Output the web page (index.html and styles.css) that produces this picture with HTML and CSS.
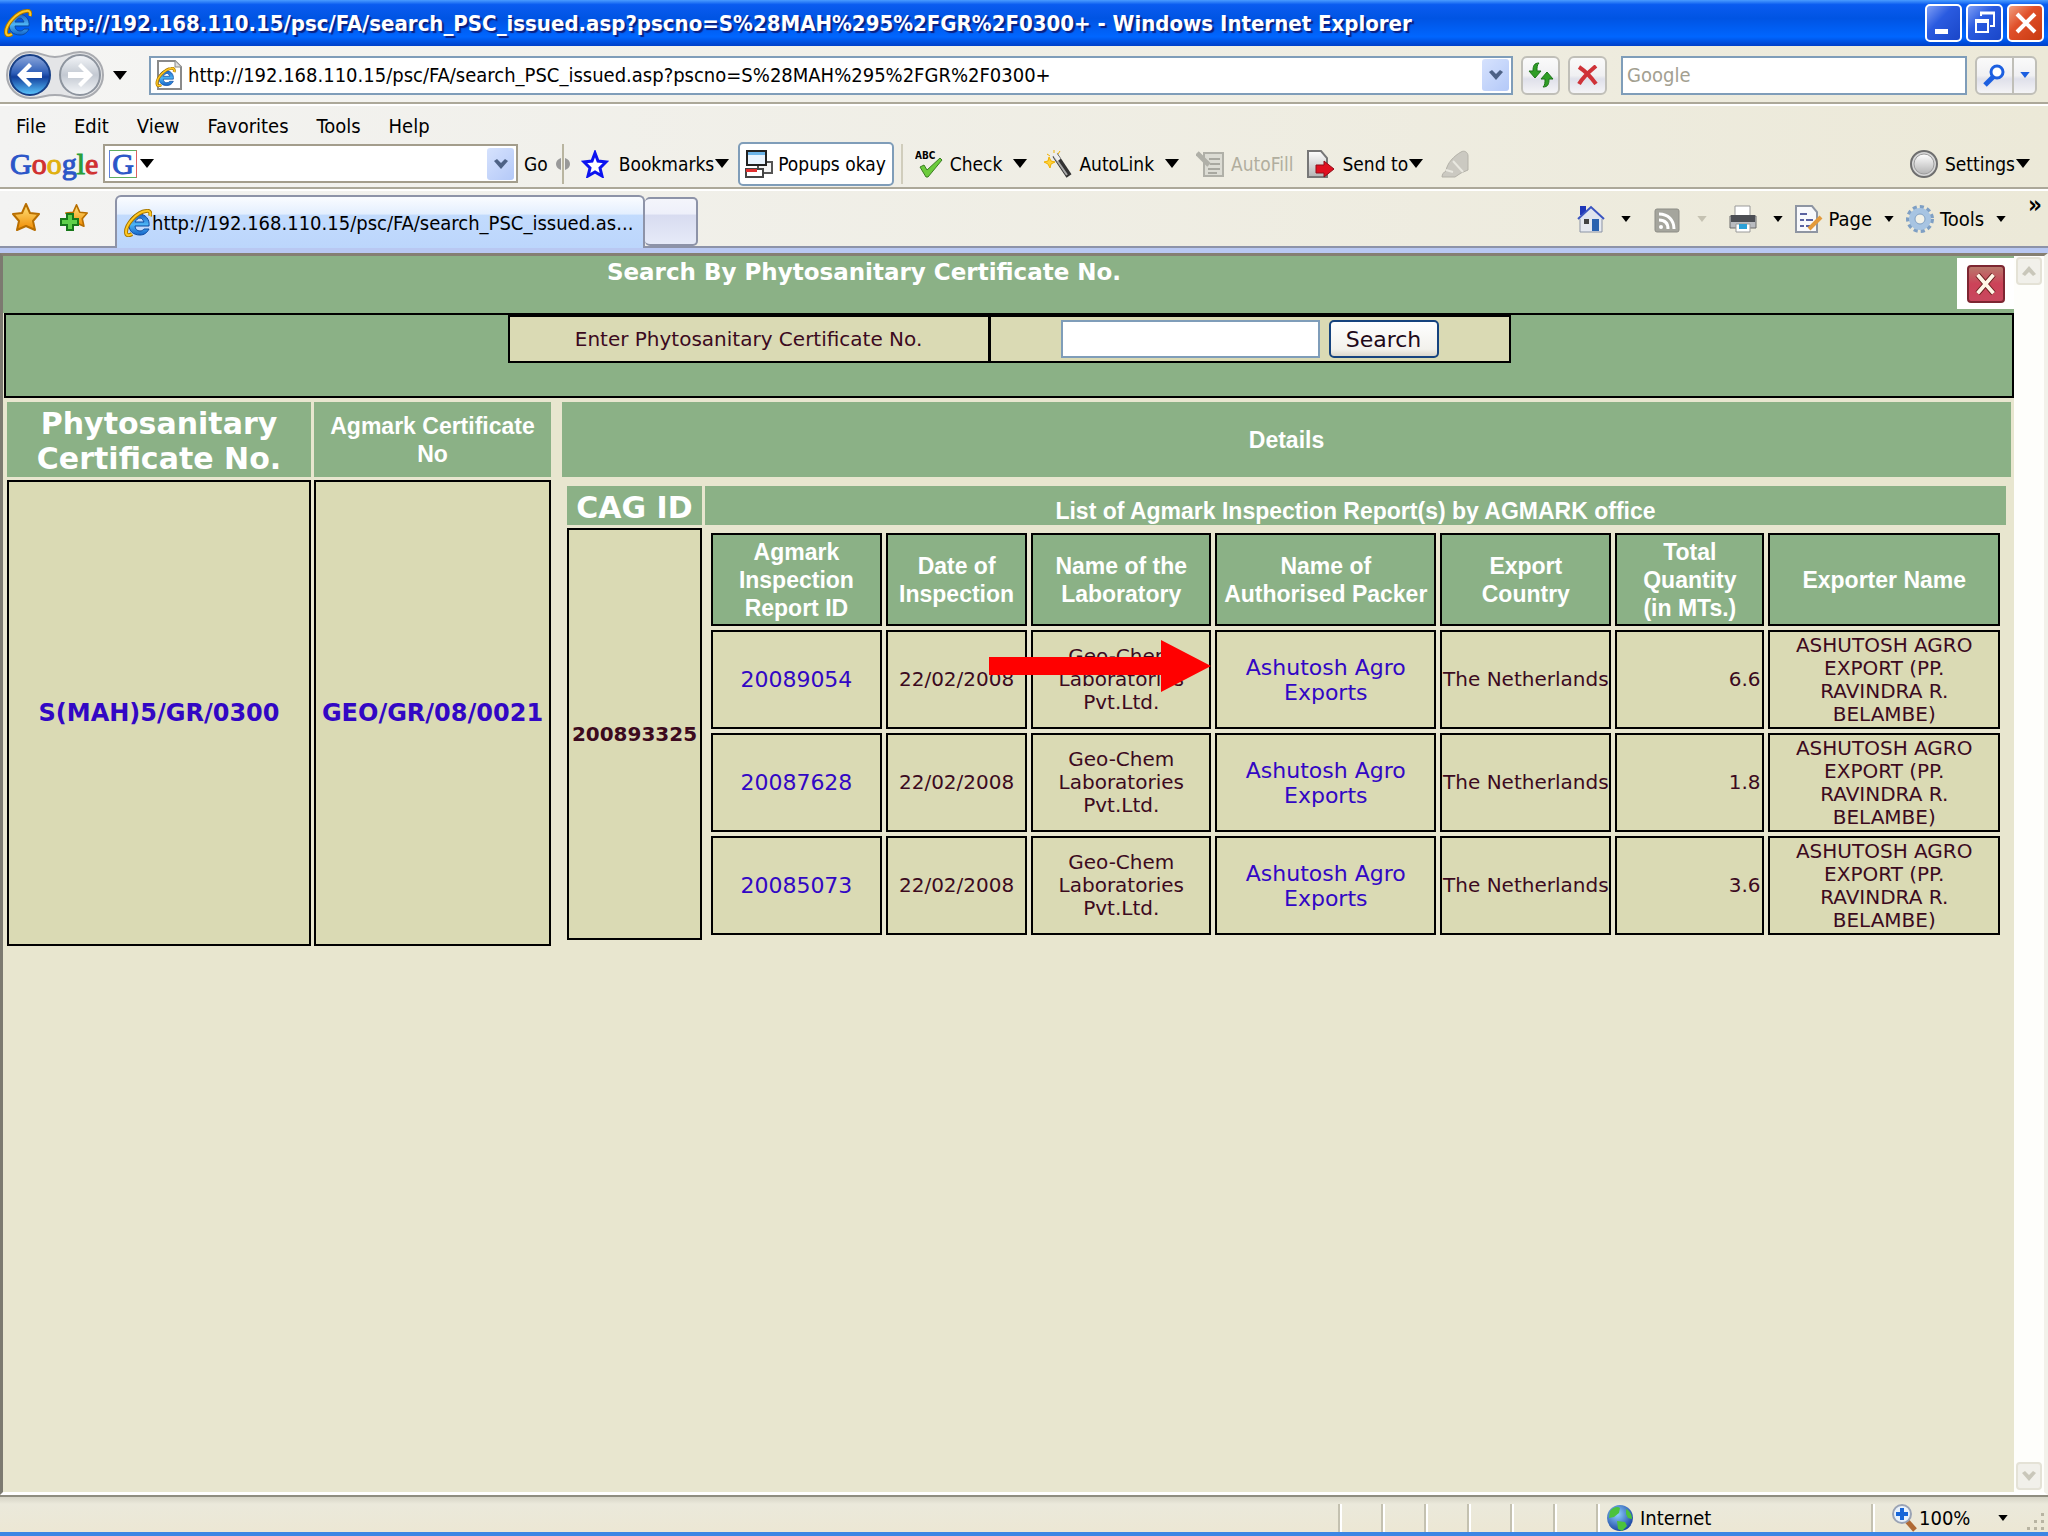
FILE: index.html
```html
<!DOCTYPE html>
<html lang="en">
<head>
    <meta charset="UTF-8">
    <meta name="viewport" content="width=device-width, initial-scale=1.0">
    <title>Search By Phytosanitary Certificate No.</title>
    <link rel="stylesheet" href="styles.css">
</head>
<body>
    <!-- shared icons -->
    <svg class="defs" width="0" height="0" aria-hidden="true">
        <defs>
            <linearGradient id="ie-blue" x1="0" y1="0" x2="0" y2="1">
                <stop offset="0" stop-color="#1c5fc4"/>
                <stop offset="0.5" stop-color="#4db4f4"/>
                <stop offset="1" stop-color="#1565c8"/>
            </linearGradient>
            <linearGradient id="gold" x1="0" y1="0" x2="0" y2="1">
                <stop offset="0" stop-color="#ffe680"/>
                <stop offset="1" stop-color="#f08a00"/>
            </linearGradient>
            <linearGradient id="back-fill" x1="0" y1="0" x2="0" y2="1">
                <stop offset="0" stop-color="#8fa9dc"/>
                <stop offset="0.45" stop-color="#2f5fb8"/>
                <stop offset="0.55" stop-color="#123f9c"/>
                <stop offset="1" stop-color="#5cc8ff"/>
            </linearGradient>
            <linearGradient id="fwd-fill" x1="0" y1="0" x2="0" y2="1">
                <stop offset="0" stop-color="#f4f6f9"/>
                <stop offset="0.5" stop-color="#c3c9d2"/>
                <stop offset="1" stop-color="#f6f8fa"/>
            </linearGradient>
            <linearGradient id="grey-fill" x1="0" y1="0" x2="0" y2="1">
                <stop offset="0" stop-color="#ffffff"/>
                <stop offset="1" stop-color="#b4b4b4"/>
            </linearGradient>
            <radialGradient id="globe-fill" cx="0.4" cy="0.35" r="0.7">
                <stop offset="0" stop-color="#8fd0ff"/>
                <stop offset="1" stop-color="#153f9e"/>
            </radialGradient>
        </defs>
        <symbol id="ie" viewBox="0 0 28 28">
            <path d="M25 17H11c0 3 2 5 5 5 2 0 3-1 4-2h5c-2 4-5 6-9 6-7 0-11-4-11-10S9 5 15 5s11 5 10 12zM11 13h9c-1-2-2-4-4-4s-4 2-5 4z" fill="url(#ie-blue)" stroke="#0d4aa0" stroke-width="1"/>
            <path d="M26 7c1-3 0-6-4-5C13 3 2 15 2 23c0 4 3 4 6 2" fill="none" stroke="#a97800" stroke-width="4"/>
            <path d="M26 7c1-3 0-6-4-5C13 3 2 15 2 23c0 4 3 4 6 2" fill="none" stroke="#ffc823" stroke-width="2"/>
        </symbol>
        <symbol id="down" viewBox="0 0 14 9">
            <path d="M0 0h14L7 9z" fill="currentColor"/>
        </symbol>
        <symbol id="chevron" viewBox="0 0 16 12">
            <path d="M1 3l3-2 4 4 4-4 3 2-7 8z" fill="currentColor"/>
        </symbol>
        <symbol id="star" viewBox="0 0 28 28">
            <path d="M14 1l4 9 9 1-6 7 2 9-9-4-9 4 2-9-6-7 9-1z" fill="url(#gold)" stroke="#b86e00" stroke-width="2" stroke-linejoin="round"/>
        </symbol>
    </svg>

    <header class="titlebar">
        <svg class="icon"><use href="#ie"/></svg>
        <span class="window-title">http://192.168.110.15/psc/FA/search_PSC_issued.asp?pscno=S%28MAH%295%2FGR%2F0300+ - Windows Internet Explorer</span>
        <div class="window-buttons">
            <button type="button" class="win-btn" aria-label="Minimize">
                <svg width="30" height="30" viewBox="0 0 30 30"><path d="M6 21h13v5H6z" fill="#fff"/></svg>
            </button>
            <button type="button" class="win-btn" aria-label="Restore">
                <svg width="30" height="30" viewBox="0 0 30 30" fill="none" stroke="#fff"><path d="M11 8V5h13v13h-4" stroke-width="2"/><path d="M10 5h15" stroke-width="3"/><path d="M6 12h12v12H6z" stroke-width="2"/><path d="M5 13h14" stroke-width="4"/></svg>
            </button>
            <button type="button" class="win-btn win-close" aria-label="Close">
                <svg width="30" height="30" viewBox="0 0 30 30"><path d="M6 6l18 18M24 6L6 24" stroke="#fff" stroke-width="4"/></svg>
            </button>
        </div>
    </header>

    <div class="navbar">
        <button type="button" class="travel" aria-label="Back and forward">
            <svg width="98" height="50" viewBox="0 0 98 50">
                <path d="M24 2c12 0 14 5 25 5S62 2 74 2a23 23 0 010 46c-12 0-14-3-25-3s-13 3-25 3a23 23 0 010-46z" fill="#e4e5e7" stroke="#a9abb0" stroke-width="2"/>
                <circle cx="24" cy="25" r="20" fill="url(#back-fill)" stroke="#173f86" stroke-width="2"/>
                <path d="M11 25l12-12 3 3-6 6h16v6H20l6 6-3 3z" fill="#fff"/>
                <circle cx="74" cy="25" r="20" fill="url(#fwd-fill)" stroke="#8d949e" stroke-width="2"/>
                <path d="M87 25L75 13l-3 3 6 6H62v6h16l-6 6 3 3z" fill="#fff"/>
            </svg>
        </button>
        <svg class="arrow"><use href="#down"/></svg>
        <div class="address">
            <svg width="28" height="30" viewBox="0 0 28 30">
                <path d="M3 1h17l6 6v22H3z" fill="#fff" stroke="#8a8a8a" stroke-width="2"/>
                <path d="M20 1v6h6" fill="#ddd" stroke="#8a8a8a"/>
                <use href="#ie" x="0" y="7" width="21" height="20"/>
            </svg>
            <input type="text" aria-label="Address" value="http://192.168.110.15/psc/FA/search_PSC_issued.asp?pscno=S%28MAH%295%2FGR%2F0300+">
            <button type="button" class="combo-btn" aria-label="Show addresses"><svg width="16" height="12"><use href="#chevron"/></svg></button>
        </div>
        <button type="button" class="nav-btn" aria-label="Refresh">
            <svg width="28" height="26" viewBox="0 0 28 26" fill="#2f9e26" stroke="#1c7518"><path d="M12 1C7 1 6 4 6 9H2l6 7 6-7h-4c0-4 0-6 2-8z"/><path d="M16 25c5 0 6-3 6-8h4l-6-7-6 7h4c0 4 0 6-2 8z"/></svg>
        </button>
        <button type="button" class="nav-btn" aria-label="Stop">
            <svg width="22" height="20" viewBox="0 0 22 20"><path d="M2 2c6 4 12 10 17 17M19 1C13 6 6 12 2 19" fill="none" stroke="#cf3238" stroke-width="4"/></svg>
        </button>
        <input type="text" class="search-box" aria-label="Search the web" placeholder="Google">
        <div class="split-btn">
            <button type="button" aria-label="Search"><svg width="24" height="24" viewBox="0 0 24 24"><circle cx="14" cy="9" r="6" fill="#fff" stroke="#1c5fe0" stroke-width="3"/><path d="M10 14l-8 8" stroke="#1c5fe0" stroke-width="5"/></svg></button>
            <button type="button" class="split-arrow" aria-label="Search options"><svg width="10" height="6"><use href="#down"/></svg></button>
        </div>
    </div>

    <nav class="menubar">
        <a href="#">File</a>
        <a href="#">Edit</a>
        <a href="#">View</a>
        <a href="#">Favorites</a>
        <a href="#">Tools</a>
        <a href="#">Help</a>
    </nav>

    <div class="google-bar">
        <span class="google-logo"><i class="b">G</i><i class="r">o</i><i class="y">o</i><i class="b">g</i><i class="g">l</i><i class="r">e</i></span>
        <div class="google-combo">
            <span class="g-box">G</span>
            <svg class="arrow"><use href="#down"/></svg>
            <input type="text" aria-label="Google search">
            <button type="button" class="combo-btn" aria-label="Search history"><svg width="16" height="12"><use href="#chevron"/></svg></button>
        </div>
        <button type="button" class="tool go">Go</button>
        <svg class="grip" width="14" height="40" viewBox="0 0 14 40"><path d="M7 0v40" stroke="#b9b5a0" stroke-width="2"/><path d="M5 14v12c-3-1-5-3-5-6s2-5 5-6zM9 14v12c3-1 5-3 5-6s-2-5-5-6z" fill="#999"/></svg>
        <button type="button" class="tool bookmarks">
            <svg class="icon" viewBox="0 0 28 28"><path d="M14 3l3 8 8 1-6 6 2 8-7-4-7 4 2-8-6-6 8-1z" fill="#fff" stroke="#0b12f0" stroke-width="3"/></svg>
            <span>Bookmarks</span><svg class="arrow"><use href="#down"/></svg>
        </button>
        <button type="button" class="tool popups">
            <svg class="icon" viewBox="0 0 28 28"><path d="M13 12h14v11H13z" fill="#f4f4f4" stroke="#555" stroke-width="2"/><path d="M1 19h17v8H1z" fill="#fff" stroke="#444" stroke-width="2"/><path d="M1 19h11v3H1z" fill="#e03030"/><path d="M2 1h19v14H2z" fill="#e9f4ff" stroke="#222" stroke-width="2"/><path d="M3 2h17v3H3z" fill="#6cb4e8"/></svg>
            <span>Popups okay</span>
        </button>
        <span class="divider"></span>
        <button type="button" class="tool check">
            <svg class="icon" viewBox="0 0 28 28"><text x="0" y="9" class="abc">ABC</text><path d="M5 17l4-2 3 5L25 8l2 2-14 17h-2z" fill="#6ccc3c" stroke="#3b7d22"/></svg>
            <span>Check</span><svg class="arrow far"><use href="#down"/></svg>
        </button>
        <button type="button" class="tool autolink">
            <svg class="icon" viewBox="0 0 28 28"><path d="M11 5l14 21" stroke="#333" stroke-width="6"/><path d="M10 6l13 19" stroke="#aaa" stroke-width="2"/><path d="M10 3l5 7" stroke="#eee" stroke-width="4"/><path d="M5 7l2 4 4 1-4 2-1 4-2-4-4-2 4-1zM10 0v3M16 1l-2 3M3 4l3 2" fill="#ffd23a" stroke="#f0b000"/></svg>
            <span>AutoLink</span><svg class="arrow far"><use href="#down"/></svg>
        </button>
        <button type="button" class="tool autofill" disabled>
            <svg class="icon" viewBox="0 0 28 28"><path d="M8 3h19v23H8z" fill="#dcdcd4" stroke="#b0b0a8" stroke-width="2"/><path d="M13 9h11M14 14h10M12 19h12M12 23h9" stroke="#a8a8a0" stroke-width="2"/><path d="M1 3l12 12" stroke="#b0b0a8" stroke-width="5"/></svg>
            <span>AutoFill</span>
        </button>
        <button type="button" class="tool send">
            <svg class="icon" viewBox="0 0 28 28"><path d="M1 1h13l6 7v19H1z" fill="url(#grey-fill)" stroke="#777" stroke-width="2"/><path d="M9 15h8v-4l10 8-10 8v-4H9z" fill="#e01020" stroke="#900c18"/></svg>
            <span>Send to</span><svg class="arrow"><use href="#down"/></svg>
        </button>
        <svg class="icon" viewBox="0 0 28 28"><path d="M20 2c3-2 7 0 7 4v14l-7 3-6 4H1c0-3 2-5 4-6 1-8 8-15 15-19z" fill="#cbc9c1" stroke="#b3b1a8"/><path d="M12 11l10 11M5 20l7 2" stroke="#e9e8e0" stroke-width="2"/></svg>
        <button type="button" class="tool settings">
            <svg class="icon" viewBox="0 0 28 28"><circle cx="14" cy="14" r="13" fill="#d6d6d6" stroke="#6e6e6e" stroke-width="2"/><circle cx="14" cy="14" r="10" fill="url(#grey-fill)" stroke="#9d9d9d" stroke-width="1"/></svg>
            <span>Settings</span><svg class="arrow"><use href="#down"/></svg>
        </button>
    </div>

    <div class="tabbar">
        <div class="favs">
            <svg class="icon"><use href="#star"/></svg>
            <svg class="icon" viewBox="0 0 28 28"><use href="#star" x="5" y="0" width="23" height="25"/><path d="M7 11h6v5h5v6h-5v5H7v-5H1v-6h6z" fill="#5fd04a" stroke="#17781a" stroke-width="2"/></svg>
        </div>
        <a class="tab" href="#"><svg class="icon"><use href="#ie"/></svg>http://192.168.110.15/psc/FA/search_PSC_issued.as...</a>
        <button type="button" class="new-tab" aria-label="New Tab"></button>
        <div class="commands">
            <button type="button" class="cmd" aria-label="Home">
                <svg class="icon" viewBox="0 0 28 28"><path d="M3 1h6v9H3z" fill="#2038b8"/><path d="M3 13h22v14H3z" fill="#e6e9f0" stroke="#8b93a5"/><path d="M1 14L14 2l13 12" fill="#dfe4ee" stroke="#3a54c0" stroke-width="2"/><path d="M15 14h7v12h-7z" fill="#2a62b0"/><path d="M7 14h5v5H7z" fill="#444"/></svg>
                <svg class="arrow small"><use href="#down"/></svg>
            </button>
            <button type="button" class="cmd off" aria-label="Feeds">
                <svg class="icon" viewBox="0 0 28 28"><rect x="2" y="4" width="24" height="23" rx="2" fill="#a5a59d" stroke="#8d8d86"/><path d="M6 9c9 0 15 6 15 15M6 15c6 0 9 3 9 9" fill="none" stroke="#fff" stroke-width="3"/><circle cx="8" cy="22" r="2" fill="#fff"/></svg>
                <svg class="arrow small"><use href="#down"/></svg>
            </button>
            <button type="button" class="cmd" aria-label="Print">
                <svg class="icon" viewBox="0 0 28 28"><path d="M6 1h15v11H6z" fill="#fff" stroke="#999"/><path d="M1 11h26v12H1z" fill="#b9bbc0" stroke="#6b6b6b"/><path d="M2 10h24v7H2z" fill="#4c4e54"/><path d="M7 19h14v8H7z" fill="#fff" stroke="#999"/><path d="M10 19h8v5h-8z" fill="#2aa0d8"/></svg>
                <svg class="arrow small"><use href="#down"/></svg>
            </button>
            <button type="button" class="cmd tight">
                <svg class="icon" viewBox="0 0 28 28"><path d="M1 1h16l5 6v20H1z" fill="#f8f9fc" stroke="#8e95a2" stroke-width="2"/><path d="M5 9h7M5 15h4M11 15h7M5 21h4M11 21h5" stroke="#5a62a0" stroke-width="2"/><path d="M26 12L14 24" stroke="#e39a3c" stroke-width="4"/></svg>
                <span>Page</span><svg class="arrow small"><use href="#down"/></svg>
            </button>
            <button type="button" class="cmd tight">
                <svg class="icon" viewBox="0 0 28 28"><circle cx="14" cy="14" r="12" fill="none" stroke="#7e9fc4" stroke-width="4" stroke-dasharray="4 3"/><circle cx="14" cy="14" r="8" fill="none" stroke="#a7c4e2" stroke-width="6"/><circle cx="14" cy="14" r="5" fill="#f3f2e8" stroke="#7e9fc4"/></svg>
                <span>Tools</span><svg class="arrow small"><use href="#down"/></svg>
            </button>
            <button type="button" class="more" aria-label="More">»</button>
        </div>
    </div>

    <div class="viewport">
        <main class="page">
            <div class="page-head">
                <h1>Search By Phytosanitary Certificate No.</h1>
                <div class="page-close">
                    <button type="button" aria-label="Close page"><svg width="30" height="30" viewBox="0 0 30 30"><path d="M6 5l17 20M23 5L6 25" stroke="#6b2020" stroke-width="6"/><path d="M6 5l17 20M23 5L6 25" stroke="#fff6e6" stroke-width="4"/></svg></button>
                </div>
            </div>

            <div class="search-area">
                <form class="search-form">
                    <div class="form-cell"><label for="cert-no">Enter Phytosanitary Certificate No.</label></div>
                    <div class="form-cell">
                        <input type="text" id="cert-no" name="cert-no">
                        <button type="submit">Search</button>
                    </div>
                </form>
            </div>

            <table class="results">
                <colgroup>
                    <col class="col-psc"><col class="col-agmark"><col class="col-gap"><col>
                </colgroup>
                <tr class="results-head">
                    <th class="big">Phytosanitary Certificate No.</th>
                    <th>Agmark Certificate No</th>
                    <td></td>
                    <th>Details</th>
                </tr>
                <tr>
                    <td class="cell cert"><a href="#">S(MAH)5/GR/0300</a></td>
                    <td class="cell cert"><a href="#">GEO/GR/08/0021</a></td>
                    <td></td>
                    <td class="holder">
                        <table class="details">
                            <colgroup><col class="col-cag"><col></colgroup>
                            <tr class="details-head">
                                <th class="big">CAG ID</th>
                                <th>List of Agmark Inspection Report(s) by AGMARK office</th>
                            </tr>
                            <tr>
                                <td class="cell cag">200893325</td>
                                <td class="list-holder">
                                    <table class="reports">
                                        <colgroup>
                                            <col class="c-id"><col class="c-date"><col class="c-lab"><col class="c-packer"><col class="c-country"><col class="c-qty"><col class="c-exporter">
                                        </colgroup>
                                        <tr>
                                            <th>Agmark Inspection Report ID</th>
                                            <th>Date of Inspection</th>
                                            <th>Name of the Laboratory</th>
                                            <th>Name of Authorised Packer</th>
                                            <th>Export Country</th>
                                            <th>Total Quantity<br>(in MTs.)</th>
                                            <th>Exporter Name</th>
                                        </tr>
                                        <tr>
                                            <td><a href="#">20089054</a></td>
                                            <td>22/02/2008</td>
                                            <td class="pointed">Geo-Chem Laboratories Pvt.Ltd.<svg class="pointer" width="222" height="52" viewBox="0 0 222 52"><path d="M0 17h172V0l50 26-50 26V35H0z" fill="#f00"/></svg></td>
                                            <td><a href="#">Ashutosh Agro Exports</a></td>
                                            <td>The Netherlands</td>
                                            <td class="qty">6.6</td>
                                            <td>ASHUTOSH AGRO EXPORT (PP. RAVINDRA R. BELAMBE)</td>
                                        </tr>
                                        <tr>
                                            <td><a href="#">20087628</a></td>
                                            <td>22/02/2008</td>
                                            <td>Geo-Chem Laboratories Pvt.Ltd.</td>
                                            <td><a href="#">Ashutosh Agro Exports</a></td>
                                            <td>The Netherlands</td>
                                            <td class="qty">1.8</td>
                                            <td>ASHUTOSH AGRO EXPORT (PP. RAVINDRA R. BELAMBE)</td>
                                        </tr>
                                        <tr>
                                            <td><a href="#">20085073</a></td>
                                            <td>22/02/2008</td>
                                            <td>Geo-Chem Laboratories Pvt.Ltd.</td>
                                            <td><a href="#">Ashutosh Agro Exports</a></td>
                                            <td>The Netherlands</td>
                                            <td class="qty">3.6</td>
                                            <td>ASHUTOSH AGRO EXPORT (PP. RAVINDRA R. BELAMBE)</td>
                                        </tr>
                                    </table>
                                </td>
                            </tr>
                        </table>
                    </td>
                </tr>
            </table>
        </main>

        <div class="scrollbar">
            <button type="button" aria-label="Scroll up" disabled><svg class="flip" width="16" height="12"><use href="#chevron"/></svg></button>
            <button type="button" aria-label="Scroll down" disabled><svg width="16" height="12"><use href="#chevron"/></svg></button>
        </div>
    </div>

    <footer class="statusbar">
        <span class="pane"></span>
        <span class="pane"></span>
        <span class="pane"></span>
        <span class="pane"></span>
        <span class="pane"></span>
        <span class="pane"></span>
        <span class="pane zone">
            <svg class="icon" viewBox="0 0 28 28"><circle cx="14" cy="14" r="13" fill="url(#globe-fill)"/><path d="M4 7c3-4 8-5 10-3l-1 5-5 4-5 1zM20 5c4 2 6 6 6 10l-4-1-2-4zM11 17l8 1 2 4-5 5-4-2z" fill="#4cc23c"/></svg>
            Internet
        </span>
        <span class="pane zoom">
            <svg class="icon" viewBox="0 0 28 28"><path d="M16 17l8 9" stroke="#b06a34" stroke-width="5"/><circle cx="11" cy="10" r="9" fill="#e8f1fb" stroke="#9aa3b5" stroke-width="2"/><path d="M11 4v12M5 10h12" stroke="#1766d8" stroke-width="4"/></svg>
            100%
            <svg class="arrow small"><use href="#down"/></svg>
            <svg class="size-grip" width="20" height="20" viewBox="0 0 20 20"><path d="M15 1h3v3h-3zM15 8h3v3h-3zM15 15h3v3h-3zM8 8h3v3H8zM8 15h3v3H8zM1 15h3v3H1z" fill="#b8b4a2"/></svg>
        </span>
    </footer>
</body>
</html>
```
FILE: styles.css
```css
* {
    box-sizing: border-box;
}

body {
    margin: 0;
    height: 100vh;
    display: flex;
    flex-direction: column;
    background-color: #ece9d8;
    color: #000;
    font-family: "DejaVu Sans Condensed", "DejaVu Sans", sans-serif;
    font-size: 20px;
}

button,
input {
    font: inherit;
    color: inherit;
    margin: 0;
}

button {
    padding: 0;
    border: none;
    background: none;
}

svg {
    display: block;
    flex-shrink: 0;
}

.defs {
    position: absolute;
}

.icon {
    width: 28px;
    height: 28px;
}

.arrow {
    width: 14px;
    height: 9px;
}

.arrow.small {
    width: 10px;
    height: 6px;
}

/* window title */
.titlebar {
    display: flex;
    align-items: center;
    height: 46px;
    padding: 0 4px;
    background: linear-gradient(#4a9cff 0, #0a5cf0 10%, #0054e3 40%, #0066ff 80%, #0040c8 100%);
    color: #fff;
}

.window-title {
    flex: 1;
    padding-left: 8px;
    font-size: 22px;
    font-weight: bold;
    white-space: nowrap;
    text-shadow: 2px 2px 1px #0a1f80;
}

.window-buttons {
    display: flex;
    gap: 4px;
}

.win-btn {
    display: flex;
    align-items: center;
    justify-content: center;
    width: 37px;
    height: 38px;
    border: 2px solid #fff;
    border-radius: 5px;
    background: linear-gradient(135deg, #7f9ff5, #2a5be0 40%, #1a46c8);
}

.win-close {
    background: linear-gradient(135deg, #f0a080, #e0502a 40%, #c83a10);
}

/* navigation row */
.navbar {
    display: flex;
    align-items: center;
    height: 60px;
    padding: 0 11px 0 6px;
    border-bottom: 2px solid #fff;
    box-shadow: inset 0 -2px 0 #aca899;
    background: linear-gradient(to right, #f5f5f4, #ece9d8);
}

.navbar .arrow {
    margin: 0 22px 0 9px;
}

.address {
    display: flex;
    align-items: center;
    flex: 1;
    height: 39px;
    padding: 0 2px 0 4px;
    border: 2px solid #7f9db9;
    background-color: #fff;
}

.address input,
.google-combo input {
    flex: 1;
    min-width: 0;
    height: 30px;
    padding: 0 0 0 5px;
    border: none;
    background: none;
}

.combo-btn {
    display: flex;
    align-items: center;
    justify-content: center;
    width: 27px;
    height: 32px;
    border-radius: 3px;
    background: linear-gradient(135deg, #d6e2fd, #b4c9f8);
    color: #4d6185;
}

.nav-btn,
.split-btn {
    display: flex;
    align-items: center;
    justify-content: center;
    width: 39px;
    height: 39px;
    margin-left: 8px;
    border: 2px solid #c0bfb8;
    border-radius: 6px;
    background: linear-gradient(#fafafa, #f0f0f2 50%, #dfe0ea 60%, #f4f4f6);
}

.search-box {
    width: 346px;
    height: 39px;
    margin-left: 14px;
    padding: 0 4px;
    border: 2px solid #7f9db9;
    background-color: #fff;
}

.search-box::placeholder {
    color: #a3a091;
    opacity: 1;
}

.split-btn {
    width: 62px;
}

.split-btn button {
    display: flex;
    align-items: center;
    justify-content: center;
    flex: 1;
    height: 35px;
}

.split-btn .split-arrow {
    flex: 0 0 23px;
    border-left: 2px solid #c0bfb8;
    color: #1c5fe0;
}

/* menu */
.menubar {
    display: flex;
    align-items: center;
    gap: 28px;
    height: 38px;
    padding: 2px 16px 0;
    background: linear-gradient(to right, #f3f3f2, #ece9d8);
}

.menubar a {
    color: #000;
    text-decoration: none;
}

/* google toolbar */
.google-bar {
    display: flex;
    align-items: center;
    height: 47px;
    padding: 0 18px 6px 10px;
    border-bottom: 2px solid #fff;
    box-shadow: inset 0 -2px 0 #aca899;
    background: linear-gradient(to right, #f3f3f2, #ece9d8);
    font-size: 19px;
}

.google-logo {
    width: 93px;
    font-family: "Liberation Serif", serif;
    font-size: 30px;
    line-height: 40px;
    -webkit-text-stroke: 1px currentColor;
}

.google-logo i {
    font-style: normal;
}

.google-logo .b { color: #2b56c8; }
.google-logo .r { color: #d03030; }
.google-logo .y { color: #e0b010; }
.google-logo .g { color: #28a038; }

.google-combo {
    display: flex;
    align-items: center;
    width: 415px;
    height: 39px;
    padding: 0 2px 0 4px;
    border: 2px solid #a39d8c;
    background-color: #fff;
}

.g-box {
    width: 28px;
    height: 28px;
    margin-right: 3px;
    border: 1px solid;
    border-color: #5fae5f #e06060 #5fae5f #5f80e0;
    color: #2b56c8;
    font-family: "Liberation Serif", serif;
    font-size: 30px;
    line-height: 26px;
    text-align: center;
    -webkit-text-stroke: 1px currentColor;
}

.tool {
    display: flex;
    align-items: center;
    white-space: nowrap;
}

.tool .icon {
    margin-right: 7px;
}

.tool .arrow {
    margin-left: 1px;
}

.tool .arrow.far {
    margin-left: 11px;
}

.go {
    margin-left: 6px;
}

.grip {
    margin: 0 11px 0 8px;
}

.bookmarks .icon {
    margin-right: 10px;
}

.popups {
    height: 44px;
    margin-left: 9px;
    padding: 0 6px 0 5px;
    border: 2px solid #7f9db9;
    border-radius: 5px;
    background-color: #fff;
}

.popups .icon {
    margin-right: 5px;
}

.divider {
    width: 2px;
    height: 40px;
    margin: 0 12px 0 7px;
    background-color: #d0cdbc;
}

.abc {
    font-size: 10px;
    font-weight: bold;
}

.autolink,
.autofill {
    margin-left: 17px;
}

.autofill {
    color: #b1ae9e;
}

.send {
    margin: 0 18px 0 14px;
}

.settings {
    margin-left: auto;
}

/* tabs and command bar */
.tabbar {
    display: flex;
    align-items: flex-end;
    height: 62px;
    padding-bottom: 7px;
    background: linear-gradient(#b9c8f2, #b9c8f2) bottom / 100% 5px no-repeat,
        linear-gradient(#8d93a8, #8d93a8) 0 calc(100% - 5px) / 100% 2px no-repeat,
        linear-gradient(to right, #f3f3f2, #ece9d8);
}

.favs {
    display: flex;
    gap: 20px;
    width: 115px;
    padding: 0 0 15px 12px;
}

.tab {
    display: flex;
    align-items: center;
    width: 530px;
    height: 53px;
    margin-bottom: -2px;
    padding: 0 0 0 7px;
    border: 2px solid #8d93a8;
    border-bottom: none;
    border-radius: 6px 6px 0 0;
    background: linear-gradient(#fafcff 0, #e4effe 33%, #c2dbfd 36%, #bcd6fc 100%);
    color: #000;
    text-decoration: none;
    white-space: nowrap;
    overflow: hidden;
}

.new-tab {
    width: 53px;
    height: 49px;
    border: 2px solid #8d93a8;
    border-left: none;
    border-radius: 5px;
    background: linear-gradient(#f4f5fb 0, #eef0fa 33%, #d8dcf0 36%, #e6eaf8 100%);
}

.commands {
    display: flex;
    align-items: center;
    height: 49px;
    margin-left: auto;
    padding: 0 6px 6px 0;
}

.cmd {
    display: flex;
    align-items: center;
    margin-left: 22px;
}

.cmd .arrow {
    margin-left: 16px;
}

.cmd.tight {
    margin-left: 12px;
}

.cmd.tight span {
    margin-left: 6px;
}

.cmd.tight .arrow {
    margin-left: 12px;
}

.cmd.off .arrow {
    color: #c5c2b2;
}

.more {
    align-self: flex-start;
    margin-left: 22px;
    font-size: 24px;
    font-weight: bold;
    line-height: 16px;
}

/* browser viewport */
.viewport {
    display: flex;
    flex: 1;
    min-height: 0;
    border: solid;
    border-width: 3px 4px 3px 3px;
    border-color: #857f72 #f2f1ea #fff #7c7a70;
}

.page {
    flex: 1;
    min-width: 0;
    overflow: hidden;
    background-color: #e8e6cf;
    font-family: "DejaVu Sans", Verdana, sans-serif;
    font-size: 20px;
    line-height: 23px;
    color: #3c0a1e;
}

.page-head {
    display: flex;
    height: 57px;
    background-color: #8bb186;
}

.page-head h1 {
    flex: 1;
    margin: 4px 0 0;
    color: #fff;
    font-size: 23px;
    line-height: 24px;
    text-align: center;
}

.page-close {
    display: flex;
    justify-content: flex-end;
    width: 289px;
    padding-top: 2px;
}

.page-close button {
    display: flex;
    align-items: center;
    justify-content: center;
    width: 57px;
    height: 51px;
    background-color: #fff;
}

.page-close svg {
    width: 38px;
    height: 38px;
    padding: 3px;
    border: 2px solid #7d2632;
    border-radius: 4px;
    background: linear-gradient(#b8796c, #cc4258 50%, #c8485e);
}

.search-area {
    height: 85px;
    margin-left: 1px;
    border: 2px solid #000;
    background-color: #8bb186;
}

.search-form {
    display: flex;
    width: 50%;
    height: 48px;
    margin: 0 auto;
    border: 2px solid #000;
    background-color: #dadab4;
}

.form-cell {
    display: flex;
    flex: 52;
    align-items: center;
    justify-content: center;
    gap: 9px;
}

.form-cell:first-child {
    flex: 48;
    border-right: 3px solid #000;
}

.form-cell input {
    width: 259px;
    height: 38px;
    border: 2px solid #7f9db9;
    background-color: #fff;
}

.form-cell button {
    width: 110px;
    height: 38px;
    border: 2px solid #16437e;
    border-radius: 5px;
    background: linear-gradient(#fff, #f2f1ec 80%, #dcd8cc);
    color: #200818;
    font-size: 22px;
}

/* results */
table {
    width: 100%;
    table-layout: fixed;
    border-spacing: 3px;
}

th {
    padding: 0 2px;
    background-color: #8bb186;
    color: #fff;
    font-family: "Liberation Sans", Arial, sans-serif;
    font-size: 23px;
    line-height: 28px;
}

th.big {
    padding-top: 2px;
    font-family: "DejaVu Sans", Verdana, sans-serif;
    font-size: 30px;
    line-height: 35px;
}

td {
    padding: 0;
}

td a {
    color: #3207c4;
    font-size: 22px;
    line-height: 25px;
    text-decoration: none;
}

.results {
    padding: 1px 0 0 1px;
}

.results-head th {
    height: 75px;
}

.col-psc { width: 304px; }
.col-agmark { width: 237px; }
.col-gap { width: 5px; }
.col-cag { width: 135px; }

.cell {
    border: 2px solid #000;
    background-color: #dadab4;
    font-weight: bold;
    text-align: center;
}

.cert a {
    font-size: 24px;
}

.holder {
    padding: 3px 2px;
}

.details-head th {
    height: 39px;
    vertical-align: bottom;
}

.list-holder {
    padding: 1px 2px;
}

.reports {
    border-spacing: 4px;
}

.reports th,
.reports td {
    border: 2px solid #000;
    text-align: center;
}

.reports th {
    height: 93px;
}

.reports td {
    height: 99px;
    background-color: #dadab4;
}

.reports td.qty {
    padding-right: 2px;
    text-align: right;
}

.c-id { width: 13.5%; }
.c-date { width: 11.2%; }
.c-lab { width: 14.2%; }
.c-packer { width: 17.5%; }
.c-country { width: 13.5%; }
.c-qty { width: 11.8%; }
.c-exporter { width: 18.3%; }

.pointed {
    position: relative;
}

/* red arrow laid over the first report */
.pointer {
    position: absolute;
    top: 8px;
    right: -2px;
}

.scrollbar {
    display: flex;
    flex-direction: column;
    justify-content: space-between;
    align-items: center;
    width: 30px;
    padding: 1px 0 2px;
    background-color: #fefefb;
}

.scrollbar button {
    display: flex;
    align-items: center;
    justify-content: center;
    width: 26px;
    height: 28px;
    border: 2px solid #e4e2d6;
    border-radius: 4px;
    background-color: #f1f0ea;
    color: #c9c7ba;
}

.flip {
    transform: rotate(180deg);
}

/* status bar */
.statusbar {
    display: flex;
    justify-content: flex-end;
    height: 41px;
    padding-top: 7px;
    border-top: 2px solid #8f8d80;
    border-bottom: 4px solid #3c86e4;
    background: linear-gradient(#d6d4c6 0, #ebe9db 20%, #ece7d4 100%);
}

.pane {
    display: flex;
    align-items: center;
    width: 43px;
    border-left: 2px solid #c4c1b0;
    box-shadow: inset 2px 0 0 #fff;
}

.pane.zone {
    gap: 6px;
    width: 275px;
    padding-left: 8px;
}

.pane.zoom {
    width: 177px;
    padding-left: 18px;
}

.zoom .arrow {
    margin-left: 28px;
}

.size-grip {
    align-self: flex-end;
    margin: 0 2px 0 auto;
}
```
